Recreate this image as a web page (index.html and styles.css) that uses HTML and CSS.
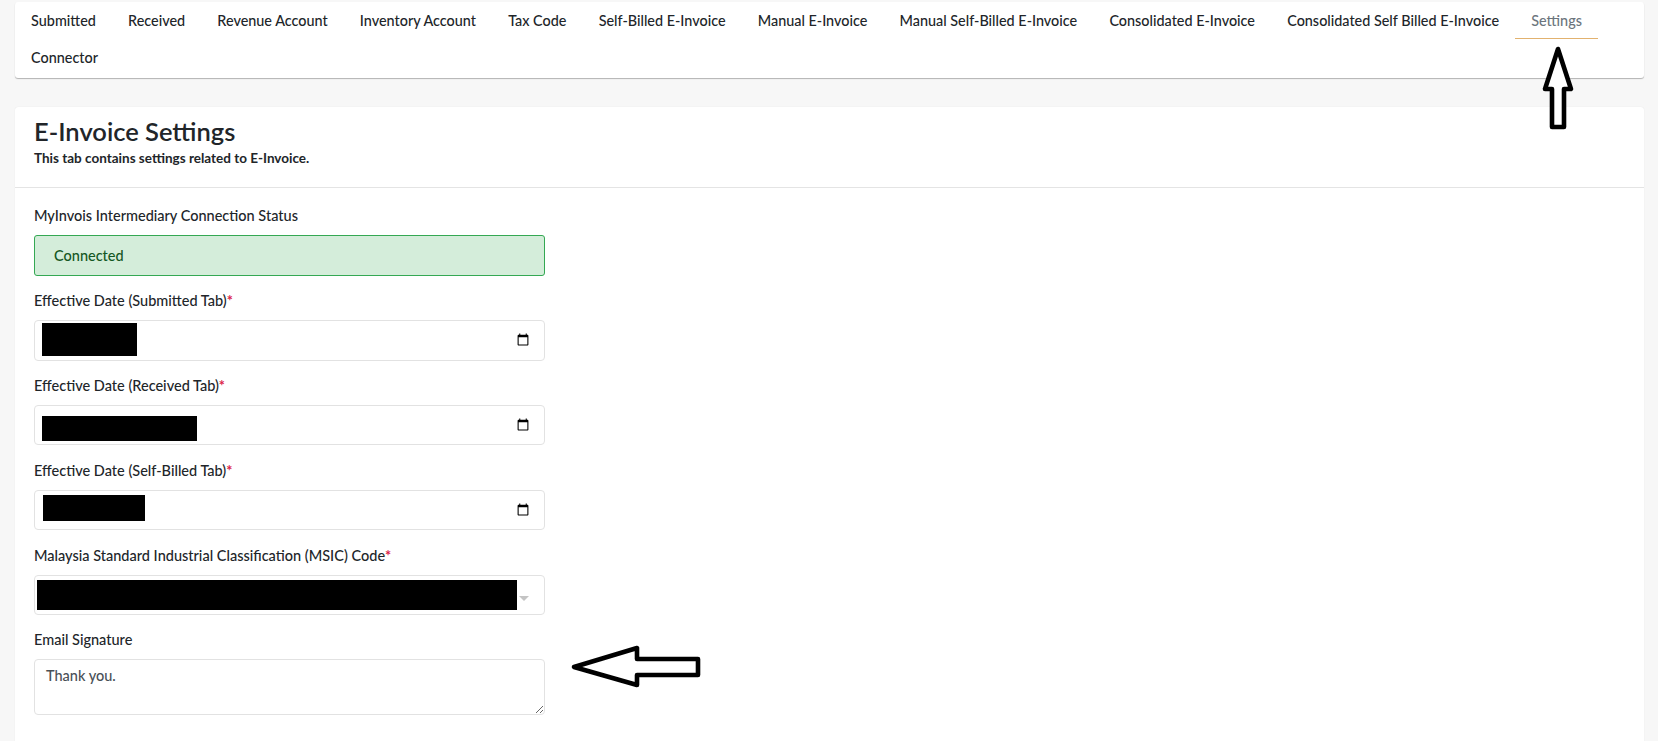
FILE: index.html
```html
<!DOCTYPE html>
<html lang="en">
<head>
<meta charset="utf-8">
<title>E-Invoice Settings</title>
<link rel="stylesheet" href="styles.css">
</head>
<body>
<nav class="card tabs">
  <a class="tab">Submitted</a>
  <a class="tab">Received</a>
  <a class="tab">Revenue Account</a>
  <a class="tab">Inventory Account</a>
  <a class="tab">Tax Code</a>
  <a class="tab">Self-Billed E-Invoice</a>
  <a class="tab">Manual E-Invoice</a>
  <a class="tab">Manual Self-Billed E-Invoice</a>
  <a class="tab">Consolidated E-Invoice</a>
  <a class="tab">Consolidated Self Billed E-Invoice</a>
  <a class="tab active">Settings</a>
  <a class="tab">Connector</a>
</nav>

<main class="card settings">
  <header class="settings-head">
    <h1>E-Invoice Settings</h1>
    <p>This tab contains settings related to E-Invoice.</p>
  </header>
  <form class="settings-body">
    <div class="field">
      <label>MyInvois Intermediary Connection Status</label>
      <div class="status">Connected</div>
    </div>
    <div class="field">
      <label>Effective Date (Submitted Tab)<span class="req">*</span></label>
      <div class="control">
        <input class="input" type="date">
        <span class="redact r1"></span>
      </div>
    </div>
    <div class="field">
      <label>Effective Date (Received Tab)<span class="req">*</span></label>
      <div class="control">
        <input class="input" type="date">
        <span class="redact r2"></span>
      </div>
    </div>
    <div class="field">
      <label>Effective Date (Self-Billed Tab)<span class="req">*</span></label>
      <div class="control">
        <input class="input" type="date">
        <span class="redact r3"></span>
      </div>
    </div>
    <div class="field">
      <label>Malaysia Standard Industrial Classification (MSIC) Code<span class="req">*</span></label>
      <div class="control">
        <div class="input select"><i class="caret"></i></div>
        <span class="redact r4"></span>
      </div>
    </div>
    <div class="field">
      <label>Email Signature</label>
      <textarea class="input area">Thank you.</textarea>
    </div>
  </form>
</main>

<svg class="arrow arrow-up" width="36" height="88" viewBox="0 0 36 88" aria-hidden="true">
  <path d="M18 3 L31 43 H24 V81 H12 V43 H5 Z" fill="#fff" stroke="#000" stroke-width="4.6" stroke-linejoin="round"/>
</svg>
<svg class="arrow arrow-left" width="134" height="48" viewBox="0 0 134 48" aria-hidden="true">
  <path d="M4 24 L67 5 V16 H128 V32 H67 V42 Z" fill="#fff" stroke="#000" stroke-width="4.6" stroke-linejoin="round"/>
</svg>
</body>
</html>
```

FILE: styles.css
```css
* { box-sizing: border-box; }

html, body { height: 100%; }

body {
  margin: 0;
  height: 741px;
  overflow: hidden;
  padding: 2px 14px 0 15px;
  background: #f7f7f7;
  font-family: "Lato", "Liberation Sans", sans-serif;
  font-size: 14.5px;
  font-weight: 500;
  color: #212529;
  position: relative;
}

.card {
  background: #fff;
  border-radius: 3px;
}

.tabs {
  display: flex;
  flex-wrap: wrap;
  align-content: flex-start;
  height: 76px;
  box-shadow: 0 1px 1px rgba(0, 0, 0, .28);
}

.tab {
  display: block;
  height: 37px;
  padding: 0 16.1px;
  line-height: 37px;
  border-bottom: 1px solid transparent;
  font-size: 14.4px;
  color: #212529;
}

.tab.active {
  color: #6c757d;
  border-bottom-color: #e2b26f;
}

.settings {
  margin-top: 29px;
  height: 640px;
  box-shadow: 0 0 1px rgba(0, 0, 0, .12);
}

.settings-head {
  height: 81px;
  padding: 9px 19px 0;
  border-bottom: 1px solid #e4e4e4;
}

.settings-head h1 {
  margin: 0;
  font-size: 25.5px;
  line-height: 30px;
  font-weight: 600;
  color: #212529;
}

.settings-head p {
  margin: 3px 0 0;
  font-size: 13.5px;
  line-height: 18px;
  font-weight: 700;
}

.settings-body {
  width: 530px;
  padding: 17px 0 0 19px;
}

.field { margin-bottom: 14.2px; }

.field label {
  display: block;
  height: 21px;
  margin-bottom: 9px;
  line-height: 21px;
}

.req {
  color: #dc1f4a;
  font-weight: 700;
}

.status {
  height: 40.7px;
  padding: 0 19px;
  line-height: 40px;
  background: #d4edda;
  border: 1px solid #34a853;
  border-radius: 3px;
  color: #155724;
}

.control { position: relative; }

.input {
  display: block;
  width: 100%;
  height: 40.7px;
  padding: 0 12px 0 10px;
  border: 1px solid #e2e2e2;
  border-radius: 4px;
  background: #fff;
  font: inherit;
  color: #495057;
}

.select { position: relative; }

.caret {
  position: absolute;
  right: 15px;
  top: 20px;
  border-left: 5px solid transparent;
  border-right: 5px solid transparent;
  border-top: 5px solid #c4c4c4;
}

.area {
  height: 56px;
  padding: 6px 11px;
  line-height: 20px;
  resize: both;
}

.redact {
  position: absolute;
  background: #000;
}

.r1 { left: 8px; top: 3px; width: 95px; height: 33px; }
.r2 { left: 8px; top: 11px; width: 155px; height: 25px; }
.r3 { left: 9px; top: 5px; width: 102px; height: 26px; }
.r4 { left: 3px; top: 5px; width: 480px; height: 30px; }

.arrow {
  position: absolute;
  display: block;
}

.arrow-up { left: 1540px; top: 46px; }
.arrow-left { left: 570px; top: 643px; }
```
